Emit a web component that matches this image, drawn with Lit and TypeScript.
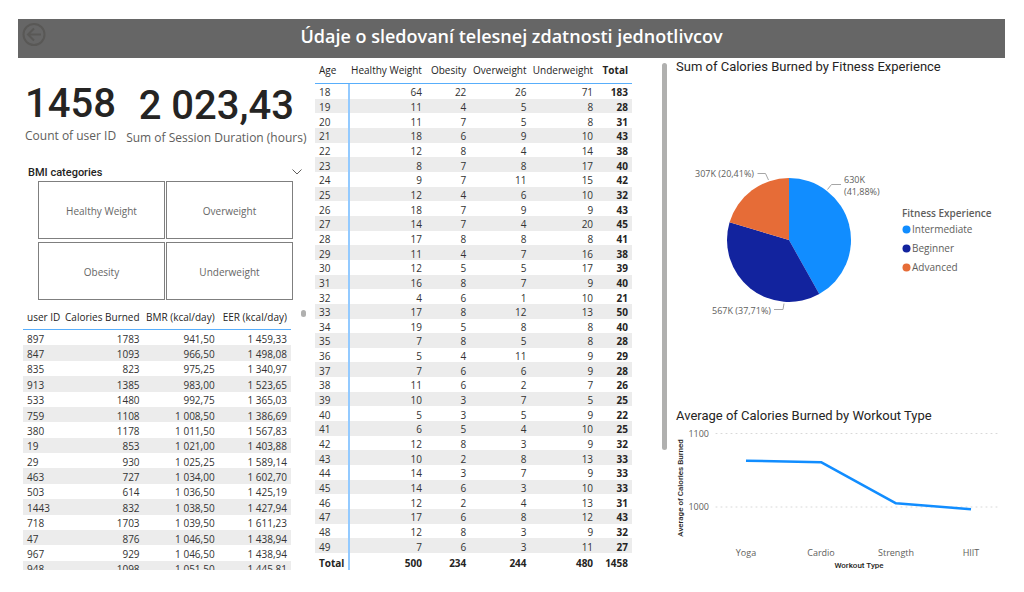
import { LitElement, html, svg, css } from "lit";
import { customElement, property, state } from "lit/decorators.js";

const BMI = ["Healthy Weight", "Overweight", "Obesity", "Underweight"];

const USERS: [number, number, string, string][] = [
  [897, 1783, "941,50", "1 459,33"],
  [847, 1093, "966,50", "1 498,08"],
  [835, 823, "975,25", "1 340,97"],
  [913, 1385, "983,00", "1 523,65"],
  [533, 1480, "992,75", "1 365,03"],
  [759, 1108, "1 008,50", "1 386,69"],
  [380, 1178, "1 011,50", "1 567,83"],
  [19, 853, "1 021,00", "1 403,88"],
  [29, 930, "1 025,25", "1 589,14"],
  [463, 727, "1 034,00", "1 602,70"],
  [503, 614, "1 036,50", "1 425,19"],
  [1443, 832, "1 038,50", "1 427,94"],
  [718, 1703, "1 039,50", "1 611,23"],
  [47, 876, "1 046,50", "1 438,94"],
  [967, 929, "1 046,50", "1 438,94"],
  [948, 1098, "1 051,50", "1 445,81"],
];

// age, healthy weight, obesity, overweight, underweight, total
const AGES: number[][] = [
  [18, 64, 22, 26, 71, 183],
  [19, 11, 4, 5, 8, 28],
  [20, 11, 7, 5, 8, 31],
  [21, 18, 6, 9, 10, 43],
  [22, 12, 8, 4, 14, 38],
  [23, 8, 7, 8, 17, 40],
  [24, 9, 7, 11, 15, 42],
  [25, 12, 4, 6, 10, 32],
  [26, 18, 7, 9, 9, 43],
  [27, 14, 7, 4, 20, 45],
  [28, 17, 8, 8, 8, 41],
  [29, 11, 4, 7, 16, 38],
  [30, 12, 5, 5, 17, 39],
  [31, 16, 8, 7, 9, 40],
  [32, 4, 6, 1, 10, 21],
  [33, 17, 8, 12, 13, 50],
  [34, 19, 5, 8, 8, 40],
  [35, 7, 8, 5, 8, 28],
  [36, 5, 4, 11, 9, 29],
  [37, 7, 6, 6, 9, 28],
  [38, 11, 6, 2, 7, 26],
  [39, 10, 3, 7, 5, 25],
  [40, 5, 3, 5, 9, 22],
  [41, 6, 5, 4, 10, 25],
  [42, 12, 8, 3, 9, 32],
  [43, 10, 2, 8, 13, 33],
  [44, 14, 3, 7, 9, 33],
  [45, 14, 6, 3, 10, 33],
  [46, 12, 2, 4, 13, 31],
  [47, 17, 6, 8, 12, 43],
  [48, 12, 8, 3, 9, 32],
  [49, 7, 6, 3, 11, 27],
];

const SLICES = [
  { name: "Intermediate", share: 41.88, color: "#118dff" },
  { name: "Beginner", share: 37.71, color: "#12239e" },
  { name: "Advanced", share: 20.41, color: "#e66c37" },
];

const WORKOUTS = [
  { name: "Yoga", value: 1063 },
  { name: "Cardio", value: 1061 },
  { name: "Strength", value: 1005 },
  { name: "HIIT", value: 997 },
];

const tableStyles = css`
  table {
    width: 100%;
    table-layout: fixed;
    border-collapse: separate;
    border-spacing: 0;
    font-size: 10px;
    line-height: 12px;
    color: #333;
  }
  th,
  td {
    padding: 2px 4px 0;
    text-align: right;
    white-space: nowrap;
    vertical-align: middle;
    font-weight: 400;
  }
  th:first-child,
  td:first-child {
    text-align: left;
  }
  thead th {
    height: 20px;
    padding: 0 4px 3px 0;
    border-bottom: 1px solid #58aefb;
    color: #252423;
  }
  thead th:first-child {
    padding-left: 4px;
  }
  tbody tr:nth-child(even) {
    background: #ececec;
  }
`;

@customElement("kpi-card")
class KpiCard extends LitElement {
  @property() value = "";
  @property() label = "";
  static styles = css`
    :host {
      display: flex;
      flex-direction: column;
      align-items: center;
      white-space: nowrap;
    }
    .value {
      font: 500 40px/44px Roboto, sans-serif;
      color: #252423;
    }
    .label {
      font-size: 12px;
      line-height: 20px;
      color: #605e5c;
    }
  `;
  render() {
    return html`<div class="value">${this.value}</div>
      <div class="label">${this.label}</div>`;
  }
}

@customElement("bmi-slicer")
class BmiSlicer extends LitElement {
  @state() private picked = "";
  static styles = css`
    :host {
      display: block;
      padding: 0 4px 0 10px;
    }
    .head {
      display: flex;
      justify-content: space-between;
      align-items: center;
      height: 17px;
    }
    h2 {
      margin: 0;
      font: 500 11px/16px Roboto, sans-serif;
      color: #252423;
    }
    .chevron {
      display: block;
      padding: 0;
      border: 0;
      background: none;
    }
    .chevron svg {
      display: block;
    }
    .tiles {
      display: grid;
      grid-template-columns: 1fr 1fr;
      gap: 3px 1px;
      padding: 0 9px 0 10px;
    }
    .tile {
      height: 58px;
      padding: 2px 0 0;
      border: 1px solid #7f7f7f;
      border-radius: 0;
      background: #fff;
      font: inherit;
      font-size: 10px;
      color: #666;
    }
    .tile[aria-pressed="true"] {
      background: #ececec;
    }
  `;
  render() {
    return html`<div class="head">
        <h2>BMI categories</h2>
        <button class="chevron" aria-label="Expand">
          <svg width="10" height="10" viewBox="0 0 10 10" fill="none" stroke="#605e5c">
            <path d="M.5 1.5 5 6 9.500 1.500" />
          </svg>
        </button>
      </div>
      <div class="tiles">
        ${BMI.map(
          (name) => html`<button
            class="tile"
            aria-pressed=${this.picked === name}
            @click=${() => (this.picked = this.picked === name ? "" : name)}
          >
            ${name}
          </button>`
        )}
      </div>`;
  }
}

@customElement("user-table")
class UserTable extends LitElement {
  static styles = [
    tableStyles,
    css`
      :host {
        display: flex;
        gap: 10px;
        padding-left: 5px;
        overflow: hidden;
      }
      .scroller {
        flex: 1;
        overflow: hidden;
      }
      table {
        height: 270px;
      }
      thead th {
        height: 22px;
        padding-bottom: 1px;
      }
      .c1 {
        width: 15%;
      }
      .c2 {
        width: 30%;
      }
      .c3 {
        width: 28%;
      }
      .thumb {
        width: 5px;
        height: 7px;
        margin-top: 4px;
        border-radius: 3px;
        background: #b0b0af;
      }
    `,
  ];
  render() {
    return html`<div class="scroller">
        <table>
          <colgroup>
            <col class="c1" />
            <col class="c2" />
            <col class="c3" />
            <col />
          </colgroup>
          <thead>
            <tr>
              <th>user ID</th>
              <th>Calories Burned</th>
              <th>BMR (kcal/day)</th>
              <th>EER (kcal/day)</th>
            </tr>
          </thead>
          <tbody>
            ${USERS.map((r) => html`<tr>${r.map((c) => html`<td>${c}</td>`)}</tr>`)}
          </tbody>
        </table>
      </div>
      <div class="thumb"></div>`;
  }
}

@customElement("age-matrix")
class AgeMatrix extends LitElement {
  static styles = [
    tableStyles,
    css`
      :host {
        display: flex;
        gap: 30px;
        padding: 2px 1px 0 9px;
      }
      .scroller {
        flex: 1;
      }
      table {
        height: 510px;
      }
      .c1 {
        width: 11%;
      }
      .c2 {
        width: 24%;
      }
      .c3 {
        width: 14%;
      }
      .c4 {
        width: 19%;
      }
      .c5 {
        width: 21%;
      }
      th:first-child,
      td:first-child {
        border-right: 2px solid #93caff;
      }
      thead th:first-child {
        border-right: 0;
      }
      th:last-child,
      td:last-child,
      tfoot td {
        font-weight: 700;
        color: #252423;
      }
      tfoot td {
        height: 15px;
      }
      .thumb {
        width: 5px;
        height: 387px;
        margin-top: 3px;
        border-radius: 3px;
        background: #b0b0af;
      }
    `,
  ];
  render() {
    return html`<div class="scroller">
        <table>
          <colgroup>
            <col class="c1" />
            <col class="c2" />
            <col class="c3" />
            <col class="c4" />
            <col class="c5" />
            <col />
          </colgroup>
          <thead>
            <tr>
              <th>Age</th>
              <th>Healthy Weight</th>
              <th>Obesity</th>
              <th>Overweight</th>
              <th>Underweight</th>
              <th>Total</th>
            </tr>
          </thead>
          <tbody>
            ${AGES.map((r) => html`<tr>${r.map((c) => html`<td>${c}</td>`)}</tr>`)}
          </tbody>
          <tfoot>
            <tr>
              <td>Total</td>
              <td>500</td>
              <td>234</td>
              <td>244</td>
              <td>480</td>
              <td>1458</td>
            </tr>
          </tfoot>
        </table>
      </div>
      <div class="thumb"></div>`;
  }
}

const chartTitle = css`
  h2 {
    margin: 0;
    padding-left: 8px;
    font: 400 13px/18px Roboto, sans-serif;
    color: #252423;
    white-space: nowrap;
  }
  svg {
    display: block;
  }
`;

@customElement("experience-pie")
class ExperiencePie extends LitElement {
  static styles = [
    chartTitle,
    css`
      :host {
        display: flex;
        flex-direction: column;
      }
      .body {
        flex: 1;
        display: flex;
        align-items: center;
        gap: 4px;
      }
      .pie {
        flex: 1;
        min-width: 0;
      }
      .pie text {
        font-size: 9px;
        fill: #605e5c;
      }
      .leader {
        fill: none;
        stroke: #a6a6a6;
      }
      .legend {
        width: 103px;
        font-size: 10px;
        color: #605e5c;
      }
      h3 {
        margin: 0;
        font-size: 10px;
        line-height: 14px;
        font-weight: 600;
        white-space: nowrap;
      }
      ul {
        margin: 0;
        padding: 0;
        list-style: none;
      }
      li {
        display: flex;
        align-items: center;
        gap: 1px;
        line-height: 19px;
      }
    `,
  ];

  private wedge(from: number, to: number, color: string) {
    const cx = 121;
    const cy = 78;
    const r = 62;
    const at = (p: number) => {
      const a = (p / 100) * 2 * Math.PI;
      return `${cx + r * Math.sin(a)} ${cy - r * Math.cos(a)}`;
    };
    const large = to - from > 50 ? 1 : 0;
    return svg`<path fill=${color} d="M${cx} ${cy}L${at(from)}A${r} ${r} 0 ${large} 1 ${at(to)}Z" />`;
  }

  render() {
    let start = 0;
    const wedges = SLICES.map((s) => {
      const path = this.wedge(start, start + s.share, s.color);
      start += s.share;
      return path;
    });
    return html`<h2>Sum of Calories Burned by Fitness Experience</h2>
      <div class="body">
        <svg class="pie" viewBox="0 0 230 160">
          ${wedges}
          <path class="leader" d="M89.500 11.500h8l3 6.500M159.500 27.500l4-5h9.500M116 141.500l-1 6h-9" />
          <text x="86" y="15" text-anchor="end">307K (20,41%)</text>
          <text x="176" y="21">630K</text>
          <text x="176" y="33">(41,88%)</text>
          <text x="103" y="152" text-anchor="end">567K (37,71%)</text>
        </svg>
        <div class="legend">
          <h3>Fitness Experience</h3>
          <ul>
            ${SLICES.map(
              (s) => html`<li>
                <svg width="9" height="9" viewBox="0 0 9 9">
                  <circle cx="4.500" cy="4.500" r="4" fill=${s.color} />
                </svg>
                <span>${s.name}</span>
              </li>`
            )}
          </ul>
        </div>
      </div>`;
  }
}

@customElement("workout-line")
class WorkoutLine extends LitElement {
  static styles = [
    chartTitle,
    css`
      :host {
        display: block;
      }
      .plot {
        width: 100%;
      }
      .tick {
        font-size: 9px;
        fill: #605e5c;
      }
      .axis {
        font-family: Roboto, sans-serif;
        font-size: 8px;
        font-weight: 500;
        fill: #252423;
      }
      .grid {
        stroke: #d8d8d8;
        stroke-linecap: round;
        stroke-dasharray: 1 4;
      }
      .line {
        fill: none;
        stroke: #118dff;
        stroke-width: 2.500;
        stroke-linejoin: round;
      }
    `,
  ];
  render() {
    const x = (i: number) => 78 + i * 75;
    const y = (v: number) => 8.5 + (1100 - v) * 0.735;
    const points = WORKOUTS.map((w, i) => `${x(i)},${y(w.value)}`).join(" ");
    return html`<h2>Average of Calories Burned by Workout Type</h2>
      <svg class="plot" viewBox="0 0 337 147">
        ${[1100, 1000].map(
          (v) => svg`<line class="grid" x1="48" x2="331" y1=${y(v)} y2=${y(v)} />
            <text class="tick" x="41" y=${y(v) + 3} text-anchor="end">${v}</text>`
        )}
        <polyline class="line" points=${points} />
        ${WORKOUTS.map(
          (w, i) => svg`<text class="tick" x=${x(i)} y="131" text-anchor="middle">${w.name}</text>`
        )}
        <text class="axis" x="191" y="143" text-anchor="middle">Workout Type</text>
        <text class="axis" transform="translate(15 63) rotate(-90)" text-anchor="middle">
          Average of Calories Burned
        </text>
      </svg>`;
  }
}

@customElement("app-root")
class AppRoot extends LitElement {
  static styles = css`
    :host {
      display: flex;
      flex-direction: column;
      box-sizing: border-box;
      min-height: 100vh;
      padding: 19px 19px 22px 18px;
      background: #fff;
      font-family: "Open Sans", "Noto Sans", sans-serif;
    }
    header {
      display: grid;
      grid-template-columns: 32px 1fr 32px;
      align-items: start;
      height: 39px;
      background: #666;
    }
    .back {
      display: block;
      padding: 4px;
      border: 0;
      background: none;
    }
    .back svg {
      display: block;
    }
    h1 {
      margin: 0;
      font-size: 18px;
      line-height: 34px;
      font-weight: 600;
      text-align: center;
      color: #fff;
    }
    main {
      flex: 1;
      display: grid;
      grid-template-columns: 288fr 362fr 337fr;
    }
    .column {
      display: flex;
      flex-direction: column;
      min-width: 0;
    }
    .kpis {
      display: flex;
      gap: 10px;
      box-sizing: border-box;
      height: 106px;
      padding: 24px 0 0 7px;
    }
    .second {
      padding-top: 2px;
    }
    user-table {
      height: 264px;
      margin-top: 6px;
    }
    experience-pie {
      height: 349px;
    }
  `;
  render() {
    return html`<header>
        <button class="back" aria-label="Back">
          <svg width="24" height="24" viewBox="0 0 24 24" fill="none" stroke="#595856" stroke-width="2">
            <circle cx="12" cy="11.500" r="10.500" />
            <path d="M19 11.500H6.500M12 5.500l-6 6 6 6" />
          </svg>
        </button>
        <h1>Údaje o sledovaní telesnej zdatnosti jednotlivcov</h1>
      </header>
      <main>
        <section class="column">
          <div class="kpis">
            <kpi-card value="1458" label="Count of user ID"></kpi-card>
            <kpi-card class="second" value="2 023,43" label="Sum of Session Duration (hours)"></kpi-card>
          </div>
          <bmi-slicer></bmi-slicer>
          <user-table></user-table>
        </section>
        <age-matrix></age-matrix>
        <section class="column">
          <experience-pie></experience-pie>
          <workout-line></workout-line>
        </section>
      </main>`;
  }
}
